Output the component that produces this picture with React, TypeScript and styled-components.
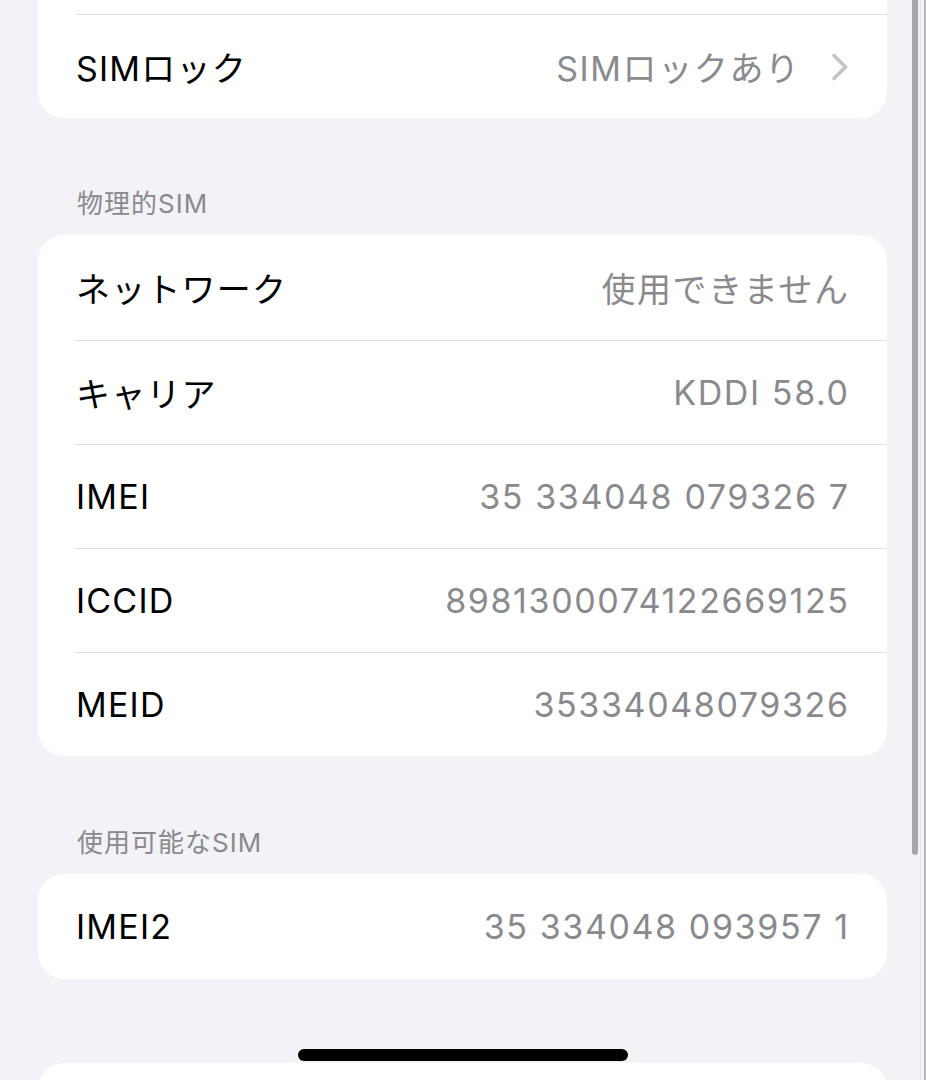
import React from "react";
import styled, { createGlobalStyle } from "styled-components";

const Global = createGlobalStyle`
  html, body {
    margin: 0;
    padding: 0;
    background: #f2f2f7;
    overflow: hidden;
  }
  body {
    font-family: Inter, "Noto Sans CJK JP", sans-serif;
    -webkit-font-smoothing: antialiased;
  }
`;

const Page = styled.div`
  width: 926px;
  height: 1080px;
  box-sizing: border-box;
  padding: 0 39px 0 38px;
  display: flex;
  flex-direction: column;
  overflow: hidden;
  position: relative;
`;

const Lead = styled.div`
  margin-top: -90px;
`;

const Card = styled.div<{ $gap?: number }>`
  background: #ffffff;
  border-radius: 26px;
  overflow: hidden;
  display: flex;
  flex-direction: column;
  margin-top: ${(p) => p.$gap ?? 0}px;
  flex-shrink: 0;
`;

const Row = styled.div<{ $first?: boolean }>`
  height: 104.2px;
  box-sizing: border-box;
  margin-left: 38px;
  padding-right: 39px;
  display: flex;
  align-items: center;
  justify-content: space-between;
  border-top: ${(p) => (p.$first ? "none" : "1.2px solid #dedee2")};
`;

const Label = styled.span`
  font-size: 34px;
  color: #000000;
  letter-spacing: 1.2px;
  white-space: nowrap;
`;

const Value = styled.span`
  font-size: 34px;
  color: #8a8a8e;
  white-space: nowrap;
  display: flex;
  align-items: center;
  gap: 31px;
`;

const ValueText = styled.span`
  letter-spacing: 1.6px;
  margin-right: -1.6px;
`;

const Header = styled.div<{ $gap: number }>`
  margin-top: ${(p) => p.$gap}px;
  margin-bottom: 15px;
  padding-left: 39px;
  height: 32px;
  line-height: 32px;
  font-size: 26px;
  color: #8a8a8e;
  letter-spacing: 1px;
`;

const Chevron = styled.svg`
  width: 18px;
  height: 28px;
  flex-shrink: 0;
`;

const HomeIndicator = styled.div`
  position: absolute;
  left: 298px;
  top: 1049px;
  width: 330px;
  height: 12px;
  border-radius: 6px;
  background: #000000;
`;

const ScrollThumb = styled.div`
  position: absolute;
  left: 912px;
  top: 0;
  width: 6px;
  height: 855px;
  border-radius: 0 0 3px 3px;
  background: #a6a6ab;
`;

const EdgeLine = styled.div<{ $x: number; $w: number; $c: string }>`
  position: absolute;
  left: ${(p) => p.$x}px;
  top: 0;
  width: ${(p) => p.$w}px;
  height: 1080px;
  background: ${(p) => p.$c};
`;

type Item = { label: string; value: string; chevron?: boolean };

const physical: Item[] = [
  { label: "ネットワーク", value: "使用できません" },
  { label: "キャリア", value: "KDDI 58.0" },
  { label: "IMEI", value: "35 334048 079326 7" },
  { label: "ICCID", value: "8981300074122669125" },
  { label: "MEID", value: "35334048079326" },
];

const ListRow = ({ item, first }: { item: Item; first?: boolean }) => (
  <Row $first={first}>
    <Label>{item.label}</Label>
    <Value>
      <ValueText>{item.value}</ValueText>
      {item.chevron && (
        <Chevron viewBox="0 0 18 28">
          <path
            d="M4 2.5 L15.5 14 L4 25.5"
            fill="none"
            stroke="#c4c4c7"
            strokeWidth="3.6"
            strokeLinecap="round"
            strokeLinejoin="round"
          />
        </Chevron>
      )}
    </Value>
  </Row>
);

export default function App() {
  return (
    <>
      <Global />
      <Page>
        <Lead>
          <Card>
            <Row $first />
            <ListRow item={{ label: "SIMロック", value: "SIMロックあり", chevron: true }} />
          </Card>
        </Lead>
        <Header $gap={70}>物理的SIM</Header>
        <Card>
          {physical.map((it, i) => (
            <ListRow key={it.label} item={it} first={i === 0} />
          ))}
        </Card>
        <Header $gap={71}>使用可能なSIM</Header>
        <Card>
          <ListRow item={{ label: "IMEI2", value: "35 334048 093957 1" }} first />
        </Card>
        <Card $gap={84}>
          <Row $first />
        </Card>
        <ScrollThumb />
        <EdgeLine $x={920} $w={1} $c="#e2e2e7" />
        <EdgeLine $x={924} $w={2} $c="#b4b4b9" />
        <HomeIndicator />
      </Page>
    </>
  );
}
